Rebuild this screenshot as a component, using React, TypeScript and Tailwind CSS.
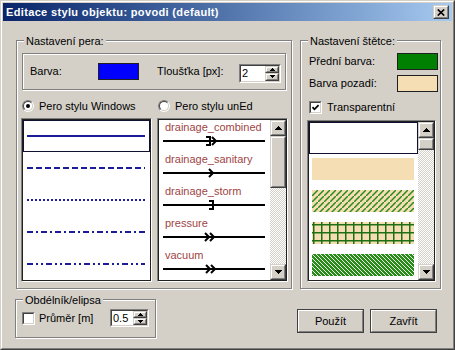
import React from "react";

type P = { className?: string; inner?: string; children?: React.ReactNode };

function Raised({ className = "", children }: P) {
  return (
    <div className={"flex border border-t-[#D4D0C8] border-l-[#D4D0C8] border-r-[#404040] border-b-[#404040] " + className}>
      <div className="flex-1 flex items-center justify-center border border-t-white border-l-white border-r-[#808080] border-b-[#808080] bg-[#D4D0C8]">
        {children}
      </div>
    </div>
  );
}

function Sunken({ className = "", inner = "", children }: P) {
  return (
    <div className={"flex border border-t-[#808080] border-l-[#808080] border-r-white border-b-white " + className}>
      <div className={"flex-1 border border-t-[#404040] border-l-[#404040] border-r-[#D4D0C8] border-b-[#D4D0C8] bg-white " + inner}>
        {children}
      </div>
    </div>
  );
}

function ListFrame({ className = "", inner = "", children }: P) {
  return (
    <div className={"flex border border-t-[#808080] border-l-[#808080] border-r-white border-b-white " + className}>
      <div className={"flex-1 border border-[#202020] bg-white overflow-hidden " + inner}>{children}</div>
    </div>
  );
}

function Etched({ className = "", children }: P) {
  return (
    <div className={"border border-[#808080] shadow-[inset_1px_1px_0_#fff,1px_1px_0_#fff] " + className}>
      {children}
    </div>
  );
}

function GroupBox({ label, className = "", children }: P & { label: string }) {
  return (
    <Etched className={"relative " + className}>
      <span className="absolute left-[7px] -top-[6px] px-[2px] bg-[#D4D0C8] leading-[13px] whitespace-nowrap">
        {label}
      </span>
      {children}
    </Etched>
  );
}

function UpTri() {
  return (
    <svg width="7" height="4" viewBox="0 0 7 4" shapeRendering="crispEdges">
      <path d="M3 0h1v1h1v1h1v1h1v1H0V3h1V2h1V1h1z" fill="black" />
    </svg>
  );
}
function DownTri() {
  return (
    <svg width="7" height="4" viewBox="0 0 7 4" shapeRendering="crispEdges">
      <path d="M0 0h7v1H6v1H5v1H4v1H3V3H2V2H1V1H0z" fill="black" />
    </svg>
  );
}
function SmallUp() {
  return (
    <svg width="5" height="3" viewBox="0 0 5 3" shapeRendering="crispEdges">
      <path d="M2 0h1v1h1v1h1v1H0V2h1V1h1z" fill="black" />
    </svg>
  );
}
function SmallDown() {
  return (
    <svg width="5" height="3" viewBox="0 0 5 3" shapeRendering="crispEdges">
      <path d="M0 0h5v1H4v1H3v1H2V2H1V1H0z" fill="black" />
    </svg>
  );
}

function Spinner({ value, className = "" }: { value: string; className?: string }) {
  return (
    <Sunken className={className} inner="flex">
      <span className="flex-1 pl-[1px] flex items-center">{value}</span>
      <div className="w-[14px] flex flex-col">
        <Raised className="flex-1">
          <SmallUp />
        </Raised>
        <Raised className="flex-1">
          <SmallDown />
        </Raised>
      </div>
    </Sunken>
  );
}

function Radio({ checked }: { checked?: boolean }) {
  return (
    <div className="w-[12px] h-[12px] shrink-0 rounded-full border border-t-[#808080] border-l-[#808080] border-r-white border-b-white flex">
      <div className="flex-1 rounded-full border border-t-[#404040] border-l-[#404040] border-r-[#D4D0C8] border-b-[#D4D0C8] bg-white flex items-center justify-center">
        {checked && <div className="w-[4px] h-[4px] rounded-full bg-black" />}
      </div>
    </div>
  );
}

function Checkbox({ checked, className = "" }: { checked?: boolean; className?: string }) {
  return (
    <Sunken className={"w-[13px] h-[13px] shrink-0 " + className} inner="flex items-center justify-center">
      {checked && (
        <svg width="7" height="7" viewBox="0 0 7 7">
          <path d="M0.5 3.2L2.5 5.3L6.6 1" stroke="black" strokeWidth="1.8" fill="none" />
        </svg>
      )}
    </Sunken>
  );
}

function Scrollbar({ thumb }: { thumb: string }) {
  return (
    <div className="w-[16px] flex flex-col shrink-0">
      <Raised className="h-[16px]">
        <UpTri />
      </Raised>
      <div className="flex-1 flex flex-col bg-[image:repeating-conic-gradient(#D4D0C8_0%_25%,#ffffff_0%_50%)] bg-[length:2px_2px]">
        <Raised className={thumb} />
      </div>
      <Raised className="h-[16px]">
        <DownTri />
      </Raised>
    </div>
  );
}

function Button({ children }: P) {
  return (
    <div className="w-[67px] h-[24px] flex border border-[#404040]">
      <div className="flex-1 flex items-center justify-center border border-t-white border-l-white border-r-[#808080] border-b-[#808080]">
        {children}
      </div>
    </div>
  );
}

const dashes: (string | undefined)[] = [undefined, "6 3", "2 2", "6 3 2 3", "6 3 2 3 2 3"];

const pens = [
  { name: "drainage_combined", sym: "M43 1H47V9H43M49 1L53 5L49 9" },
  { name: "drainage_sanitary", sym: "M46 1L50 5L46 9" },
  { name: "drainage_storm", sym: "M46 1H50V9H46" },
  { name: "pressure", sym: "M42 1L46 5L42 9M47 1L51 5L47 9" },
  { name: "vacuum", sym: "M43 1L47 5L43 9M48 1L52 5L48 9" },
];

function PenWinList() {
  return (
    <ListFrame className="w-[131px] h-[164px]" inner="flex flex-col">
      {dashes.map((d, i) => (
        <div
          key={i}
          className={
            i === 0
              ? "h-[32px] shrink-0 flex items-center border border-[#101030]"
              : "h-[32px] shrink-0 flex items-center border border-transparent"
          }
        >
          <svg width="118" height="2" className="ml-[3px]">
            <line x1="0" y1="1" x2="118" y2="1" stroke="#1C1C98" strokeWidth="2" strokeDasharray={d} />
          </svg>
        </div>
      ))}
    </ListFrame>
  );
}

function PenUnEdList() {
  return (
    <ListFrame className="w-[131px] h-[164px]" inner="flex">
      <div className="flex-1 flex flex-col overflow-hidden">
        {pens.map((p) => (
          <div key={p.name} className="h-[32px] shrink-0 flex flex-col">
            <span className="ml-[6px] mt-[1px] text-[#A04545] leading-[13px] whitespace-nowrap">{p.name}</span>
            <svg width="102" height="10" className="ml-[4px] mt-[2px]">
              <line x1="0" y1="5" x2="102" y2="5" stroke="black" strokeWidth="2" />
              <path d={p.sym} stroke="black" strokeWidth="2" fill="none" />
            </svg>
          </div>
        ))}
      </div>
      <Scrollbar thumb="h-[52px]" />
    </ListFrame>
  );
}

function BrushList() {
  return (
    <ListFrame className="ml-[6px] mt-[6px] w-[129px] h-[162px]" inner="flex">
      <div className="flex-1 flex flex-col overflow-hidden">
        <div className="h-[32px] shrink-0 border border-[#101030] bg-white" />
        <div className="h-[32px] shrink-0 pt-[4px] pl-[3px]">
          <div className="w-[102px] h-[22px] bg-[#F5DEB3]" />
        </div>
        <div className="h-[32px] shrink-0 pt-[4px] pl-[3px]">
          <svg width="102" height="22" className="block">
            <defs>
              <pattern id="hatchB" width="6" height="6" patternUnits="userSpaceOnUse">
                <rect width="6" height="6" fill="#F5DEB3" />
                <path d="M-1 7L7 -1" stroke="#2A8A1E" strokeWidth="1.5" />
              </pattern>
            </defs>
            <rect width="102" height="22" fill="url(#hatchB)" />
          </svg>
        </div>
        <div className="h-[32px] shrink-0 pt-[4px] pl-[3px]">
          <svg width="102" height="22" className="block">
            <defs>
              <pattern id="gridB" x="1" y="2" width="8" height="8" patternUnits="userSpaceOnUse">
                <rect width="8" height="8" fill="#F5DEB3" />
                <path d="M0.75 0V8M0 0.75H8" stroke="#1E6E14" strokeWidth="1.5" />
              </pattern>
            </defs>
            <rect width="102" height="22" fill="url(#gridB)" />
          </svg>
        </div>
        <div className="h-[32px] shrink-0 pt-[4px] pl-[3px]">
          <svg width="102" height="22" className="block">
            <defs>
              <pattern id="denseB" width="4" height="4" patternUnits="userSpaceOnUse">
                <rect width="4" height="4" fill="#2A8A1A" />
                <path d="M-1 -1L5 5M3 -1L5 1M-1 3L1 5" stroke="#ffffff" strokeWidth="0.9" />
              </pattern>
            </defs>
            <rect width="102" height="22" fill="url(#denseB)" />
          </svg>
        </div>
      </div>
      <Scrollbar thumb="h-[12px]" />
    </ListFrame>
  );
}

export default function App() {
  return (
    <div className="w-[455px] h-[350px] overflow-hidden bg-[#D4D0C8] font-['Liberation_Sans',sans-serif] text-[11px] leading-[13px] text-black">
      <div className="w-full h-full flex border border-t-[#D4D0C8] border-l-[#D4D0C8] border-r-[#404040] border-b-[#404040]">
        <div className="flex-1 flex flex-col p-px border border-t-white border-l-white border-r-[#808080] border-b-[#808080]">
          {/* Title bar */}
          <div className="h-[18px] shrink-0 flex items-center bg-linear-to-r from-[#0A246A] to-[#A6CAF0]">
            <span className="flex-1 pl-[3px] text-white font-bold tracking-[0.35px] whitespace-nowrap">
              Editace stylu objektu: povodi (default)
            </span>
            <Raised className="w-[16px] h-[14px] mr-[3px]">
              <svg width="8" height="7" viewBox="0 0 8 7">
                <path d="M0.8 0.5L7.2 6.5M7.2 0.5L0.8 6.5" stroke="black" strokeWidth="1.7" />
              </svg>
            </Raised>
          </div>

          {/* Body */}
          <div className="flex-1 flex flex-col">
            <div className="flex mt-[19px] ml-[13px] gap-[8px]">
              <GroupBox label="Nastavení pera:" className="w-[276px] h-[249px] flex flex-col">
                <Etched className="ml-[5px] mt-[12px] w-[264px] h-[37px] flex items-center">
                  <span className="pl-[7px] w-[75px]">Barva:</span>
                  <div className="w-[41px] h-[17px] border border-[#202020] bg-[#0000FF]" />
                  <span className="ml-[18px] w-[82px] whitespace-nowrap">Tloušťka [px]:</span>
                  <Spinner value="2" className="w-[42px] h-[19px] mt-[3px]" />
                </Etched>
                <div className="flex items-center mt-[10px] h-[12px]">
                  <div className="ml-[5px] w-[136px] flex items-center">
                    <Radio checked />
                    <span className="ml-[5px] whitespace-nowrap">Pero stylu Windows</span>
                  </div>
                  <div className="flex items-center">
                    <Radio />
                    <span className="ml-[5px] whitespace-nowrap">Pero stylu unEd</span>
                  </div>
                </div>
                <div className="flex mt-[6px] ml-[4px] gap-[5px]">
                  <PenWinList />
                  <PenUnEdList />
                </div>
              </GroupBox>

              <GroupBox label="Nastavení štětce:" className="w-[141px] h-[249px] flex flex-col">
                <div className="flex items-center justify-between mt-[12px] pl-[8px] pr-[2px] h-[17px]">
                  <span>Přední barva:</span>
                  <div className="w-[41px] h-[17px] border border-[#202020] bg-[#008000]" />
                </div>
                <div className="flex items-center justify-between mt-[5px] pl-[8px] pr-[2px] h-[17px]">
                  <span>Barva pozadí:</span>
                  <div className="w-[41px] h-[17px] border border-[#202020] bg-[#F5DEB3]" />
                </div>
                <div className="flex items-center mt-[9px] h-[13px] pl-[8px]">
                  <Checkbox checked />
                  <span className="ml-[5px]">Transparentní</span>
                </div>
                <BrushList />
              </GroupBox>
            </div>

            <div className="flex items-start mt-[10px] ml-[12px]">
              <GroupBox label="Obdélník/elipsa" className="w-[141px] h-[39px]">
                <div className="flex items-center mt-[9px] h-[18px]">
                  <Checkbox className="ml-[6px]" />
                  <span className="ml-[4px] w-[71px] whitespace-nowrap">Průměr [m]</span>
                  <Spinner value="0.5" className="w-[39px] h-[18px]" />
                </div>
              </GroupBox>
              <div className="flex gap-[6px] ml-[141px] mt-[10px]">
                <Button>Použít</Button>
                <Button>Zavřít</Button>
              </div>
            </div>
          </div>
        </div>
      </div>
    </div>
  );
}
